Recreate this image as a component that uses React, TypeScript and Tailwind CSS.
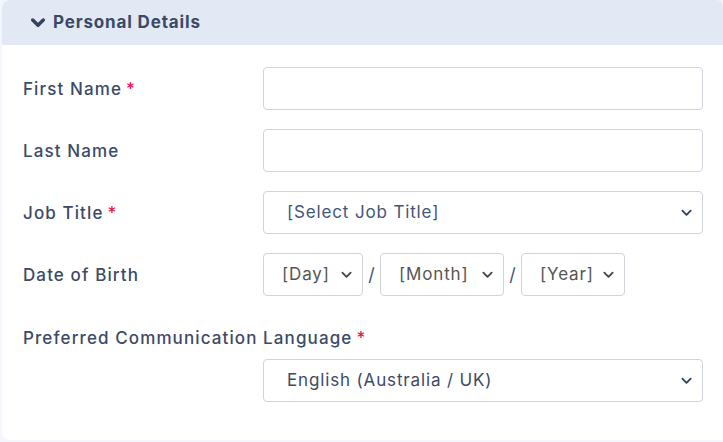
import React from 'react';

const font = { fontFamily: 'Inter, "Noto Sans", sans-serif' };

function Chevron({ className }: { className?: string }) {
  return (
    <svg viewBox="0 0 12 8" className={className} fill="none" stroke="currentColor" strokeWidth={2} strokeLinecap="round" strokeLinejoin="round">
      <path d="M1.5 1.5 6 6l4.5-4.5" />
    </svg>
  );
}

function Label({ text, required }: { text: string; required?: boolean }) {
  return (
    <label className="text-[17px] font-medium tracking-[0.065em] text-[#3c4a67] leading-6">
      {text}
      {required && <span className="ml-1 text-[#e5194d]">*</span>}
    </label>
  );
}

function Select({ value, className, textClass, arrowClass }: { value: string; className?: string; textClass?: string; arrowClass?: string }) {
  return (
    <div className={`relative h-[43px] rounded border border-[#cfd4dc] bg-white flex items-center ${className ?? ''}`}>
      <span className={`text-[17px] tracking-[0.05em] ${textClass ?? 'text-[#44557a]'}`}>{value}</span>
      <Chevron className={`absolute right-[10px] top-1/2 -translate-y-1/2 w-[11px] h-[8px] ${arrowClass ?? 'text-[#2f4060]'}`} />
    </div>
  );
}

export default function App() {
  return (
    <div className="w-[723px] h-[442px] overflow-hidden bg-[#f3f6fc] pl-[2px]" style={font}>
      <div className="h-[440px] bg-white rounded-l-lg rounded-tr-md overflow-hidden">
        {/* Header */}
        <div className="h-[45px] bg-[#e2e8f4] flex items-center pl-[29px] gap-[8px]">
          <Chevron className="w-[14px] h-[10px] text-[#34435f] stroke-[3]" />
          <span className="text-[17px] font-bold tracking-[0.05em] text-[#3a4a66]">Personal Details</span>
        </div>

        {/* Fields */}
        <div className="pl-[21px] pr-[20px] pt-[22px] flex flex-col gap-[19px]">
          <div className="grid grid-cols-[240px_1fr] items-center">
            <Label text="First Name" required />
            <div className="h-[43px] rounded border border-[#cfd4dc] bg-white" />
          </div>
          <div className="grid grid-cols-[240px_1fr] items-center">
            <Label text="Last Name" />
            <div className="h-[43px] rounded border border-[#cfd4dc] bg-white" />
          </div>
          <div className="grid grid-cols-[240px_1fr] items-center">
            <Label text="Job Title" required />
            <Select value="[Select Job Title]" className="pl-[23px]" />
          </div>
          <div className="grid grid-cols-[240px_1fr] items-center">
            <Label text="Date of Birth" />
            <div className="flex items-center">
              <Select value="[Day]" className="w-[100px] h-[42px] pl-[18px]" textClass="text-[#555]" arrowClass="text-[#444]" />
              <span className="w-[17px] text-center text-[18px] text-[#44557a]">/</span>
              <Select value="[Month]" className="w-[124px] h-[42px] pl-[18px]" textClass="text-[#555]" arrowClass="text-[#444]" />
              <span className="w-[17px] text-center text-[18px] text-[#44557a]">/</span>
              <Select value="[Year]" className="w-[104px] h-[42px] pl-[18px]" textClass="text-[#555]" arrowClass="text-[#444]" />
            </div>
          </div>
          <div className="flex flex-col mt-[11px]">
            <Label text="Preferred Communication Language" required />
            <div className="grid grid-cols-[240px_1fr] mt-[9px]">
              <div />
              <Select value="English (Australia / UK)" className="pl-[23px]" textClass="text-[#3c4a67]" />
            </div>
          </div>
        </div>
      </div>
    </div>
  );
}
